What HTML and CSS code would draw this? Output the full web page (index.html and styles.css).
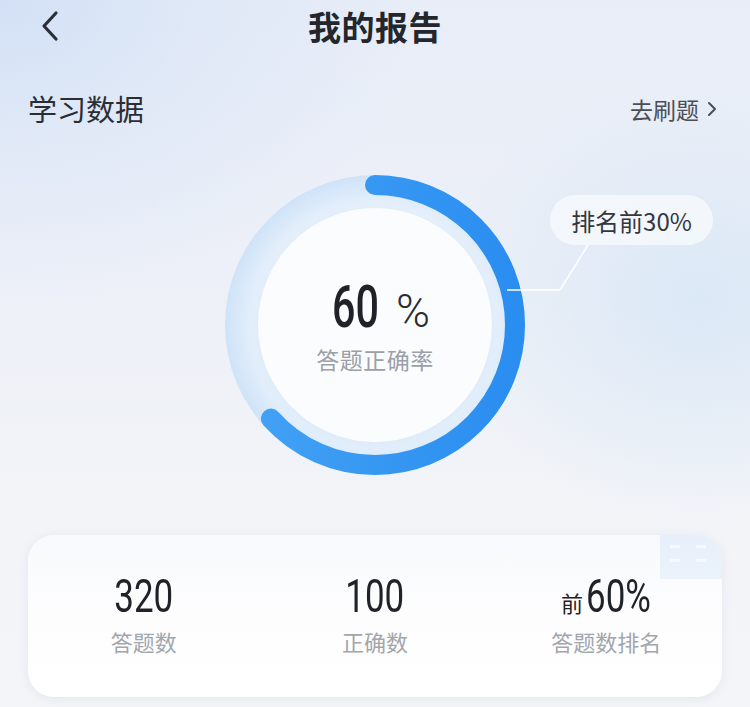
FILE: index.html
```html
<!DOCTYPE html>
<html lang="zh">
<head>
<meta charset="utf-8">
<title>我的报告</title>
<link rel="stylesheet" href="styles.css">
</head>
<body>
<div class="page">
  <header class="nav">
    <span class="back">
      <svg width="20" height="32" viewBox="0 0 20 32"><path d="M16 3 L4 16 L16 29" fill="none" stroke="#2b2f36" stroke-width="3.2" stroke-linecap="round" stroke-linejoin="round"/></svg>
    </span>
    <h1 class="title">我的报告</h1>
  </header>

  <div class="section-head">
    <h2 class="section-title">学习数据</h2>
    <a class="more">去刷题<svg width="12" height="18" viewBox="0 0 12 18"><path d="M3 3 L9 9 L3 15" fill="none" stroke="#4a4e55" stroke-width="2" stroke-linecap="round" stroke-linejoin="round"/></svg></a>
  </div>

  <div class="chart">
    <div class="ring">
      <svg class="ring-svg" width="300" height="300" viewBox="0 0 300 300">
        <defs>
          <radialGradient id="band" cx="50%" cy="50%" r="50%">
            <stop offset="70%" stop-color="#f6f9fd"/>
            <stop offset="80%" stop-color="#e6f0fb"/>
            <stop offset="100%" stop-color="#cfe3f8"/>
          </radialGradient>
          <linearGradient id="arc" x1="0" y1="0" x2="0" y2="1">
            <stop offset="0%" stop-color="#44a3f5"/>
            <stop offset="100%" stop-color="#2a8df0"/>
          </linearGradient>
          <filter id="soft" x="-20%" y="-20%" width="140%" height="140%">
            <feGaussianBlur stdDeviation="4"/>
          </filter>
        </defs>
        <circle cx="150" cy="150" r="150" fill="url(#band)"/>
        <circle cx="150" cy="152" r="118" fill="#d9e8f8" filter="url(#soft)"/>
        <circle cx="150" cy="150" r="117" fill="#fbfcfe"/>
        <circle cx="150" cy="150" r="140" fill="none" stroke="url(#arc)" stroke-width="20" stroke-linecap="round"
          stroke-dasharray="557 880" transform="rotate(-90 150 150)"/>
      </svg>
      <div class="ring-center">
        <div class="rate"><span class="rate-num">60</span><span class="rate-pct">%</span></div>
        <div class="rate-label">答题正确率</div>
      </div>
    </div>
    <svg class="leader" width="100" height="60" viewBox="0 0 100 60"><path d="M2 51 L55 51 L83 6" fill="none" stroke="#ffffff" stroke-width="1.6"/></svg>
    <div class="badge">排名前30%</div>
  </div>

  <section class="card">
    <span class="card-deco"></span>
    <div class="stat">
      <div class="stat-value"><span class="num">320</span></div>
      <div class="stat-label">答题数</div>
    </div>
    <div class="stat">
      <div class="stat-value"><span class="num">100</span></div>
      <div class="stat-label">正确数</div>
    </div>
    <div class="stat">
      <div class="stat-value"><span class="stat-prefix">前</span><span class="num num-left">60%</span></div>
      <div class="stat-label">答题数排名</div>
    </div>
  </section>
</div>
</body>
</html>
```

FILE: styles.css
```css
* { box-sizing: border-box; }
html, body { margin: 0; padding: 0; }
body {
  width: 750px;
  height: 707px;
  overflow: hidden;
  font-family: "Noto Sans CJK SC", "Noto Sans", sans-serif;
  color: #222;
  background:
    radial-gradient(ellipse 420px 300px at 0px 0px, #d3e1f6 0%, rgba(219,230,247,0.6) 50%, rgba(235,240,248,0) 100%),
    radial-gradient(ellipse 260px 220px at 700px 300px, rgba(214,230,246,0.8) 0%, rgba(230,238,248,0) 100%),
    linear-gradient(180deg, #e8edf7 0%, #edf0f7 40%, #f2f4f8 75%, #f4f5f8 100%);
}
.page {
  width: 750px;
  height: 707px;
  display: flex;
  flex-direction: column;
}
.nav {
  height: 56px;
  display: flex;
  align-items: center;
  justify-content: center;
  position: relative;
}
.back {
  position: absolute;
  left: 40px;
  top: 10px;
  display: flex;
}
.title {
  margin: 0;
  margin-top: -4px;
  font-size: 33px;
  font-weight: 700;
  color: #23262b;
  letter-spacing: 0.5px;
}
.section-head {
  height: 40px;
  margin-top: 32px;
  padding: 0 32px 0 28px;
  display: flex;
  align-items: center;
  justify-content: space-between;
}
.section-title {
  margin: 0;
  font-size: 29px;
  font-weight: 400;
  color: #2a2d33;
}
.more {
  display: flex;
  align-items: center;
  gap: 7px;
  font-size: 23px;
  color: #4a4e55;
  margin-top: 2px;
}
.chart {
  position: relative;
  height: 300px;
  margin-top: 47px;
  display: flex;
  justify-content: center;
}
.ring {
  position: relative;
  width: 300px;
  height: 300px;
}
.ring-svg { display: block; }
.ring-center {
  position: absolute;
  inset: 0;
  display: flex;
  flex-direction: column;
  align-items: center;
  justify-content: center;
  padding-top: 4px;
}
.rate {
  display: flex;
  align-items: baseline;
  gap: 17px;
  height: 58px;
  line-height: 58px;
  font-family: Roboto, "Liberation Sans", sans-serif;
  margin-left: 12px;
}
.rate-num {
  display: inline-block;
  font-size: 59px;
  font-weight: 500;
  color: #1f2226;
  transform: scaleX(0.7);
  margin: 0 -10px;
}
.rate-pct {
  display: inline-block;
  font-size: 46px;
  font-weight: 300;
  color: #2a2d32;
}
.rate-label {
  margin-top: 6px;
  font-size: 23px;
  color: #9ba0a8;
  letter-spacing: 0.5px;
}
.leader {
  position: absolute;
  left: 505px;
  top: 64px;
}
.badge {
  position: absolute;
  left: 550px;
  top: 20px;
  width: 163px;
  height: 50px;
  border-radius: 25px;
  background: rgba(246,249,253,0.85);
  display: flex;
  align-items: center;
  justify-content: center;
  font-size: 24px;
  color: #33373d;
}
.card {
  position: relative;
  margin: 60px 28px 0;
  height: 162px;
  border-radius: 26px;
  background: linear-gradient(180deg, #f7f9fc 0%, #fdfdfe 45%, #ffffff 100%);
  box-shadow: 0 2px 10px rgba(180,190,210,0.25);
  display: grid;
  grid-template-columns: 1fr 1fr 1fr;
  overflow: hidden;
}
.card-deco {
  position: absolute;
  right: 0;
  top: 0;
  width: 62px;
  height: 44px;
  background:
    linear-gradient(90deg, transparent 10px, rgba(255,255,255,0.6) 10px, rgba(255,255,255,0.6) 20px, transparent 20px, transparent 36px, rgba(255,255,255,0.6) 36px, rgba(255,255,255,0.6) 46px, transparent 46px) 0 10px / 100% 3px no-repeat,
    linear-gradient(90deg, transparent 10px, rgba(255,255,255,0.6) 10px, rgba(255,255,255,0.6) 20px, transparent 20px, transparent 36px, rgba(255,255,255,0.6) 36px, rgba(255,255,255,0.6) 46px, transparent 46px) 0 24px / 100% 3px no-repeat,
    linear-gradient(180deg, #e7f0fa 0%, #eaf2fb 100%);
}
.stat {
  display: flex;
  flex-direction: column;
  align-items: center;
  padding-top: 38px;
}
.stat-value {
  height: 46px;
  line-height: 46px;
  font-family: Roboto, "Liberation Sans", sans-serif;
  font-size: 46px;
  color: #1f2226;
  display: flex;
  align-items: baseline;
}
.num {
  display: inline-block;
  transform: scaleX(0.76);
}
.num-left {
  transform-origin: left center;
  margin-right: -20px;
}
.stat-prefix {
  font-family: "Noto Sans CJK SC", sans-serif;
  font-size: 22px;
  margin-right: 3px;
}
.stat-label {
  margin-top: 6px;
  font-size: 22px;
  color: #a2a6ad;
}
```
